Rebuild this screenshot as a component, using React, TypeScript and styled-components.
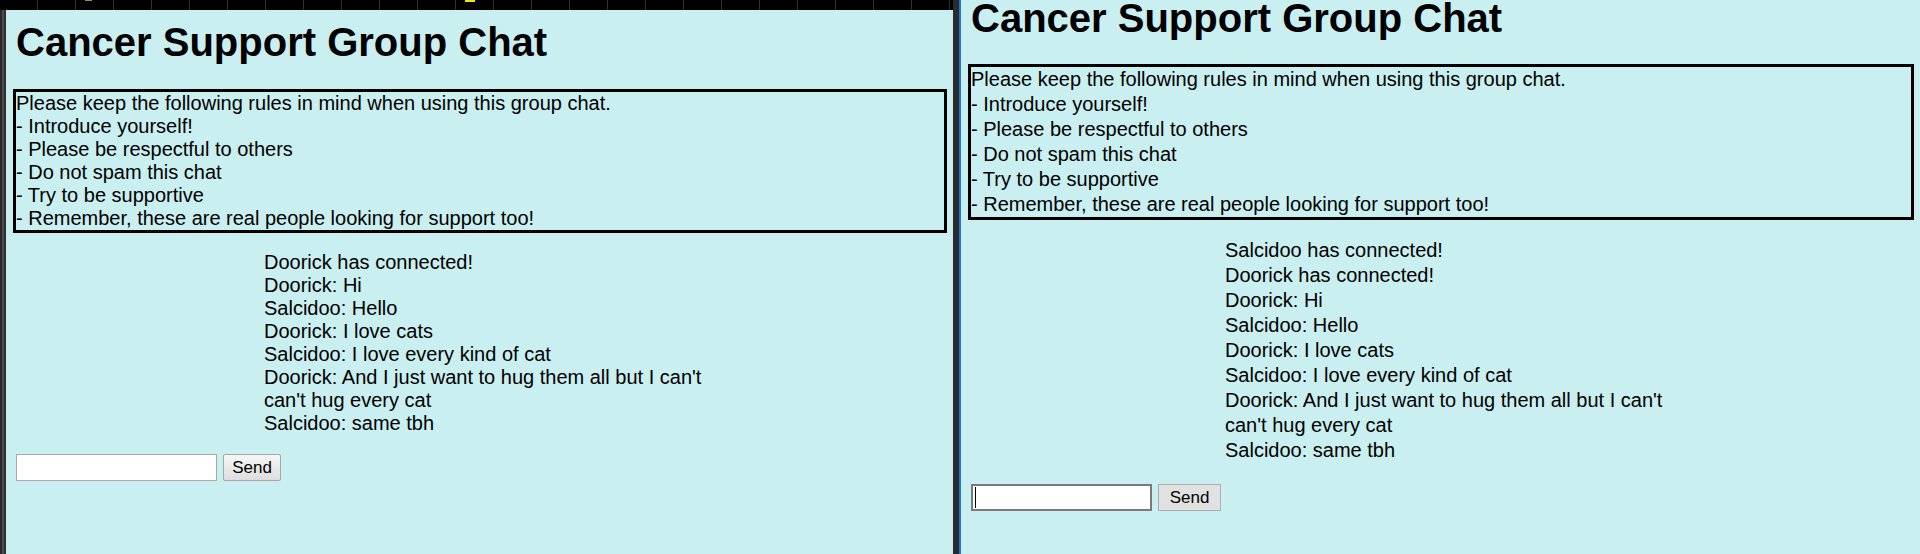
import React from 'react';
import styled, {createGlobalStyle} from 'styled-components';

const cyan = '#c9eff0';

const GlobalStyle = createGlobalStyle`
  html, body {
    margin: 0;
    padding: 0;
    background: ${cyan};
  }
  body {
    font-family: 'Liberation Sans', Arial, sans-serif;
    color: #000;
  }
`;

const rules = [
  'Please keep the following rules in mind when using this group chat.',
  '- Introduce yourself!',
  '- Please be respectful to others',
  '- Do not spam this chat',
  '- Try to be supportive',
  '- Remember, these are real people looking for support too!',
];

const chatHistory = [
  'Doorick has connected!',
  'Doorick: Hi',
  'Salcidoo: Hello',
  'Doorick: I love cats',
  'Salcidoo: I love every kind of cat',
  "Doorick: And I just want to hug them all but I can't can't hug every cat",
  'Salcidoo: same tbh',
];

// marks on the black strip above the left window, keyed by cell index
const stripMarks: Record<number, {offset: number; width: number; height: number; color: string}> = {
  2: {offset: 9, width: 7, height: 1, color: '#8a8a8a'},
  12: {offset: 9, width: 10, height: 2, color: '#f2e600'},
};

type PaneProps = {
  topPad: number;
  titleShift: number;
  lineHeight: number;
  chatIndent: number;
  composerGap: number;
  modern?: boolean;
  messages: string[];
};

const ChatPane: React.FC<PaneProps> = (props) => {
  return (
    <Page $topPad={props.topPad}>
      <Title $shift={props.titleShift}>Cancer Support Group Chat</Title>
      <RulesBox $lineHeight={props.lineHeight}>
        {rules.map((rule) => <RuleLine key={rule}>{rule}</RuleLine>)}
      </RulesBox>
      <ChatLog $lineHeight={props.lineHeight} $indent={props.chatIndent}>
        {props.messages.map((msg, i) => <Message key={i}>{msg}</Message>)}
      </ChatLog>
      <Composer $gap={props.composerGap}>
        <FieldWrap>
          <TextField type='text' $modern={props.modern}/>
          {props.modern && <Caret/>}
        </FieldWrap>
        <SendButton $modern={props.modern}>Send</SendButton>
      </Composer>
    </Page>
  );
}

export default function App() {
  return (
    <>
      <GlobalStyle/>
      <Screen>
        <LeftWindow>
          <TaskStrip>
            {Array.from({length: 26}).map((_, i) => {
              const mark = stripMarks[i];
              return (
                <StripCell key={i}>
                  {mark && <StripMark style={{marginLeft: mark.offset, width: mark.width, height: mark.height, background: mark.color}}/>}
                </StripCell>
              );
            })}
          </TaskStrip>
          <LeftBody>
            <WindowEdge/>
            <ChatPane topPad={15} titleShift={1} lineHeight={23} chatIndent={248} composerGap={19} messages={chatHistory}/>
          </LeftBody>
        </LeftWindow>
        <Divider/>
        <RightWindow>
          <ChatPane
            topPad={0}
            titleShift={2}
            lineHeight={25}
            chatIndent={254}
            composerGap={21}
            modern
            messages={['Salcidoo has connected!', ...chatHistory]}
          />
        </RightWindow>
      </Screen>
    </>
  );
}

const Screen = styled.div`
  display: flex;
  width: 1920px;
  height: 554px;
  overflow: hidden;
  background: ${cyan};
`;

const LeftWindow = styled.div`
  display: flex;
  flex-direction: column;
  width: 953px;
  flex-shrink: 0;
`;

const TaskStrip = styled.div`
  display: flex;
  height: 10px;
  background: #000;
  overflow: hidden;
`;

const StripCell = styled.div`
  width: 38px;
  flex-shrink: 0;
  box-sizing: border-box;
  border-right: 1px solid #333;
`;

const StripMark = styled.span`
  display: block;
`;

const LeftBody = styled.div`
  display: flex;
  flex: 1;
  min-height: 0;
`;

const WindowEdge = styled.div`
  width: 6px;
  flex-shrink: 0;
  background: linear-gradient(to right, #2a2a2a 0, #2a2a2a 2px, #4d4d4d 2px, #4d4d4d 4px, #303030 4px);
`;

const Divider = styled.div`
  width: 8px;
  flex-shrink: 0;
  background: linear-gradient(to right, #2b2b2b 0, #2b2b2b 6px, #1e78d4 6px);
`;

const RightWindow = styled.div`
  display: flex;
  flex: 1;
  min-width: 0;
`;

const Page = styled.div<{$topPad: number}>`
  flex: 1;
  display: flex;
  flex-direction: column;
  align-items: flex-start;
  padding: ${(p) => p.$topPad}px 6px 0 10px;
  background: ${cyan};
  min-width: 0;
`;

const Title = styled.h1<{$shift: number}>`
  margin: 0 0 ${(p) => 32 - p.$shift}px;
  padding-top: ${(p) => p.$shift}px;
  font-size: 40px;
  font-weight: bold;
  line-height: 32px;
  white-space: nowrap;
`;

const RulesBox = styled.div<{$lineHeight: number}>`
  align-self: stretch;
  margin-left: -3px;
  border: 3px solid #000;
  font-size: 20px;
  line-height: ${(p) => p.$lineHeight}px;
`;

const RuleLine = styled.div`
  white-space: nowrap;
`;

const ChatLog = styled.div<{$lineHeight: number; $indent: number}>`
  margin: 18px 0 0 ${(p) => p.$indent}px;
  width: 450px;
  font-size: 20px;
  line-height: ${(p) => p.$lineHeight}px;
`;

const Message = styled.div``;

const Composer = styled.div<{$gap: number}>`
  display: flex;
  gap: 6px;
  margin-top: ${(p) => p.$gap}px;
`;

const FieldWrap = styled.div`
  position: relative;
  display: flex;
`;

const TextField = styled.input<{$modern?: boolean}>`
  box-sizing: border-box;
  width: ${(p) => p.$modern ? 181 : 201}px;
  height: 27px;
  margin: 0;
  padding: 1px 3px;
  background: #fff;
  border: ${(p) => p.$modern ? '2px solid #7a7a7a' : '1px solid #a9a9a9'};
  border-radius: 0;
  font-family: 'Liberation Sans', Arial, sans-serif;
  font-size: 17px;
  outline: none;
`;

const Caret = styled.span`
  position: absolute;
  left: 4px;
  top: 3px;
  width: 1px;
  height: 21px;
  background: #000;
`;

const SendButton = styled.button<{$modern?: boolean}>`
  box-sizing: border-box;
  width: ${(p) => p.$modern ? 63 : 58}px;
  height: 27px;
  margin: 0;
  padding: 0;
  border: 1px solid ${(p) => p.$modern ? '#adadad' : '#a6a6a6'};
  border-radius: ${(p) => p.$modern ? 0 : 2}px;
  background: ${(p) => p.$modern ? '#e1e1e1' : 'linear-gradient(to bottom, #f6f6f6, #dddddd)'};
  color: #000;
  font-family: 'Liberation Sans', Arial, sans-serif;
  font-size: 17px;
  line-height: 25px;
`;
